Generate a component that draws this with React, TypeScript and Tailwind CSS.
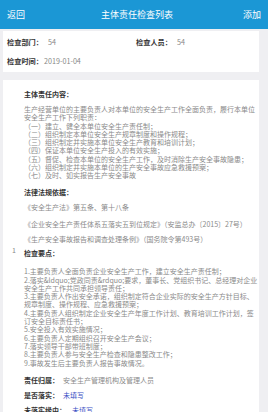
import React from "react";

const font = { fontFamily: '"Noto Sans CJK SC", "Noto Sans", sans-serif' };

function Line({ children }: { children: React.ReactNode }) {
  return <div className="whitespace-nowrap h-[8.3px] leading-[8.3px]">{children}</div>;
}

export default function App() {
  const duties = [
    "生产经营单位的主要负责人对本单位的安全生产工作全面负责，履行本单位",
    "安全生产工作下列职责：",
    "（一）建立、健全本单位安全生产责任制；",
    "（二）组织制定本单位安全生产规章制度和操作规程；",
    "（三）组织制定并实施本单位安全生产教育和培训计划；",
    "（四）保证本单位安全生产投入的有效实施；",
    "（五）督促、检查本单位的安全生产工作，及时消除生产安全事故隐患；",
    "（六）组织制定并实施本单位的生产安全事故应急救援预案；",
    "（七）及时、如实报告生产安全事故",
  ];
  const points = [
    "1.主要负责人全面负责企业安全生产工作，建立安全生产责任制；",
    "2.落实&ldquo;党政同责&rdquo;要求，董事长、党组织书记、总经理对企业",
    "安全生产工作共同承担领导责任；",
    "3.主要负责人作出安全承诺，组织制定符合企业实际的安全生产方针目标、",
    "规章制度、操作规程、应急救援预案；",
    "4.主要负责人组织制定企业安全生产年度工作计划、教育培训工作计划，签",
    "订安全目标责任书；",
    "5.安全投入有效实施情况；",
    "6.主要负责人定期组织召开安全生产会议；",
    "7.落实领导干部带班制度；",
    "8.主要负责人参与安全生产检查和隐患整改工作；",
    "9.事故发生后主要负责人报告事故情况。",
  ];
  return (
    <div className="w-[268px] h-[412px] overflow-hidden bg-[#efeff2]" style={font}>
      <div className="h-[29px] bg-[#1b97d5] flex items-center justify-between px-[7px] text-white text-[9px] leading-none">
        <span>返回</span>
        <span className="ml-[6px]">主体责任检查列表</span>
        <span>添加</span>
      </div>
      <div className="mt-[2px] ml-[3px] mr-[9px] bg-white h-[41px] px-[4px] text-[7.2px] leading-[10px] flex flex-col justify-center gap-[9px]">
        <div className="flex">
          <div className="w-[129px] flex">
            <span className="font-bold text-[#333]">检查部门：</span>
            <span className="ml-[5px] text-[#888]">54</span>
          </div>
          <div className="flex">
            <span className="font-bold text-[#333]">检查人员：</span>
            <span className="ml-[5px] text-[#888]">54</span>
          </div>
        </div>
        <div className="flex">
          <span className="font-bold text-[#333]">检查时间：</span>
          <span className="ml-[1px] text-[#888]">2019-01-04</span>
        </div>
      </div>
      <div className="mt-[8px] ml-[3px] mr-[9px] bg-white h-[340px] pl-[21px] pt-[9px] text-[7px] text-[#8a8a8a]">
        <div className="font-bold text-[#333] leading-[10px] h-[10px]">主体责任内容：</div>
        <div className="mt-[6px]">
          {duties.map((d) => (
            <Line key={d}>{d}</Line>
          ))}
        </div>
        <div className="mt-[7px] font-bold text-[#333] leading-[10px] h-[10px]">法律法规依据：</div>
        <div className="mt-[6px]"><Line>《安全生产法》第五条、第十八条</Line></div>
        <div className="mt-[8.6px]"><Line>《企业安全生产责任体系五落实五到位规定》（安监总办〔2015〕27号）</Line></div>
        <div className="mt-[7.6px]"><Line>《生产安全事故报告和调查处理条例》（国务院令第493号）</Line></div>
        <div className="mt-[4px] flex h-[10px] leading-[10px]">
          <span className="-ml-[12px] w-[12px] text-[#888] -mt-[3px]">1</span>
          <span className="font-bold text-[#333]">检查要点：</span>
        </div>
        <div className="mt-[9.5px]">
          {points.map((p) => (
            <Line key={p}>{p}</Line>
          ))}
        </div>
        <div className="mt-[8px] flex h-[10px] leading-[10px]">
          <span className="font-bold text-[#333]">责任归属：</span>
          <span className="ml-[4px]">安全生产管理机构及管理人员</span>
        </div>
        <div className="mt-[5px] flex h-[10px] leading-[10px]">
          <span className="font-bold text-[#333]">是否落实：</span>
          <span className="ml-[4px] text-[#3a4fc4]">未填写</span>
        </div>
        <div className="mt-[5px] flex h-[10px] leading-[10px]">
          <span className="font-bold text-[#333]">未落实缘由：</span>
          <span className="ml-[6px] text-[#3a4fc4]">未填写</span>
        </div>
      </div>
    </div>
  );
}
